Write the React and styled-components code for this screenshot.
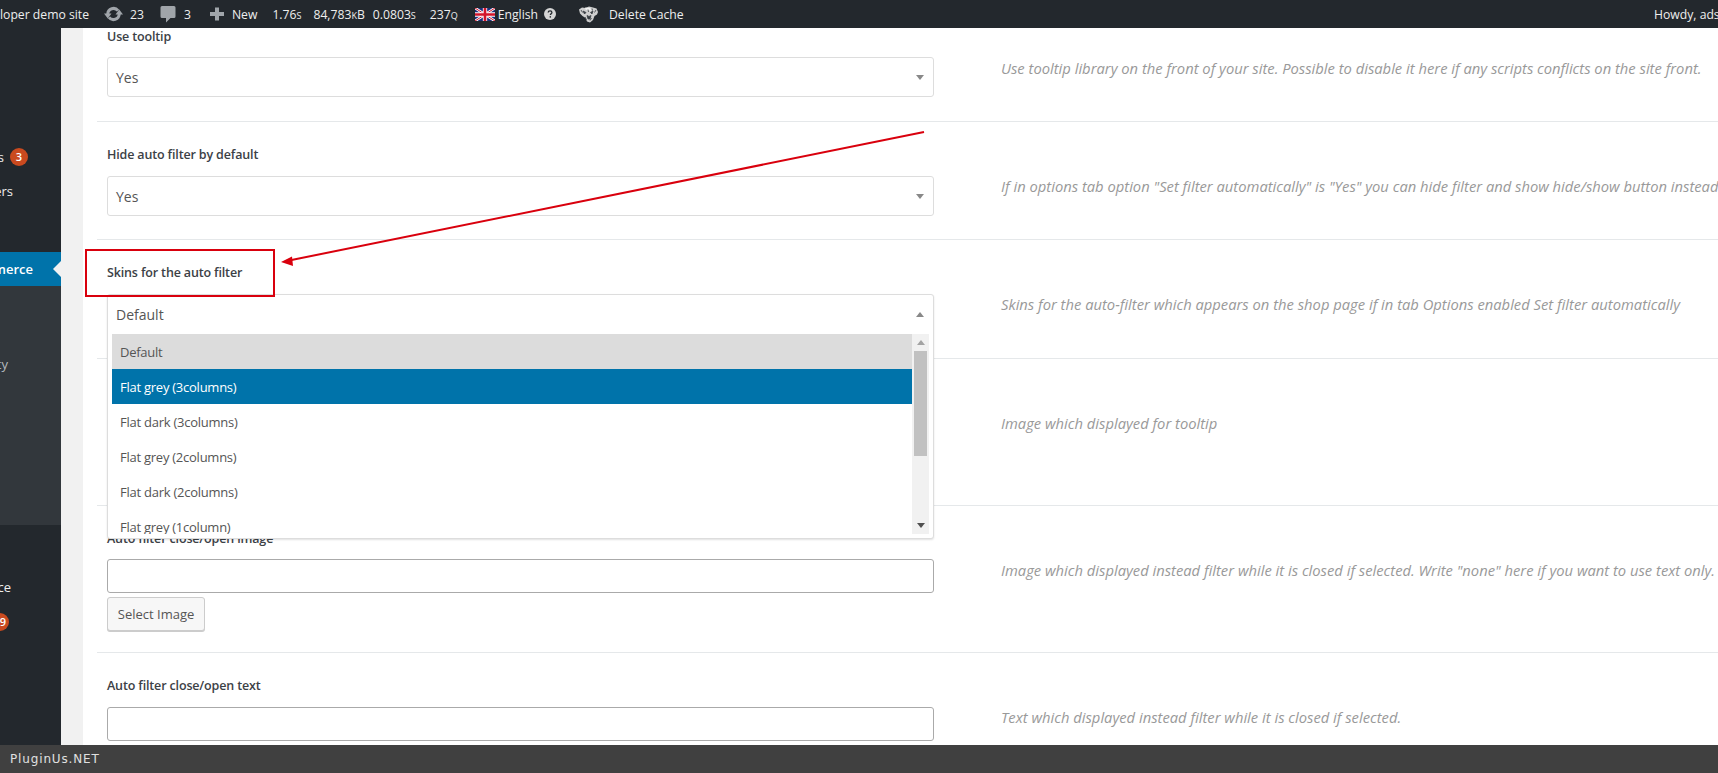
import React from "react";
import styled, { createGlobalStyle } from "styled-components";

const Global = createGlobalStyle`
  html, body { margin: 0; padding: 0; height: 100%; overflow: hidden; background: #fff; }
  body { font-family: "Open Sans", "Liberation Sans", sans-serif; }
  * { box-sizing: border-box; }
`;

const Page = styled.div`
  position: relative;
  width: 100%;
  height: 100vh;
  display: flex;
  flex-direction: column;
  overflow: hidden;
`;

/* admin bar */
const AdminBar = styled.header`
  flex: 0 0 28px;
  z-index: 4;
  display: flex;
  align-items: center;
  justify-content: space-between;
  background: #23282d;
  color: #eee;
  font-size: 12.2px;
  white-space: nowrap;
  overflow: hidden;
`;
const BarLeft = styled.div`
  display: flex;
  align-items: center;
`;
const BarItem = styled.span`
  display: inline-flex;
  align-items: center;
  margin-left: ${(p) => p.$ml || 0}px;
  gap: ${(p) => p.$gap || 0}px;
  font-variant: ${(p) => (p.$small ? "small-caps" : "normal")};
`;
const Howdy = styled.span`
  width: 64px;
  overflow: hidden;
`;

/* wp menu */
const Body = styled.div`
  flex: 1;
  min-height: 0;
  display: flex;
`;
const Sidebar = styled.nav`
  flex: 0 0 61px;
  background: #23282d;
  padding-top: 112px;
  color: #eee;
  font-size: 13px;
  overflow: hidden;
`;
const MenuItem = styled.div`
  position: relative;
  height: 34px;
  margin-top: ${(p) => p.$mt || 0}px;
  padding-right: ${(p) => p.$pr}px;
  display: flex;
  align-items: center;
  justify-content: flex-end;
  gap: 6px;
  white-space: nowrap;
`;
const ActiveItem = styled(MenuItem)`
  background: #0073aa;
  color: #fff;
  font-weight: 600;
  &::after {
    content: "";
    position: absolute;
    right: 0;
    top: 9px;
    border: 8px solid transparent;
    border-left-width: 0;
    border-right-color: #f1f1f1;
  }
`;
const Submenu = styled.div`
  height: 239px;
  padding-top: 61px;
  background: #32373c;
  color: #b4b9be;
  font-size: 13px;
`;
const Badge = styled.span`
  flex: none;
  width: 18px;
  height: 18px;
  border-radius: 50%;
  background: #ca4a1f;
  color: #fff;
  font-size: 11px;
  font-weight: 600;
  line-height: 18px;
  text-align: ${(p) => (p.$clip ? "right" : "center")};
  padding-right: ${(p) => (p.$clip ? 3 : 0)}px;
`;

/* settings */
const Gutter = styled.div`
  flex: 0 0 22px;
  background: #f1f1f1;
`;
const Content = styled.main`
  position: relative;
  flex: 1;
  min-width: 0;
  overflow: hidden;
  background: #fff;
  padding-left: 14px;
`;
const Rows = styled.div`
  margin-top: -24px;
`;
const Row = styled.section`
  display: grid;
  grid-template-columns: 827px 1fr;
  column-gap: 67px;
  padding-left: 10px;
  height: ${(p) => p.$h}px;
  border-bottom: 1px solid #e5e8ea;
`;
const Field = styled.div`
  position: relative;
  padding-top: 23px;
`;
const Label = styled.div`
  height: 20px;
  line-height: 20px;
  font-size: 12.5px;
  font-weight: 600;
  letter-spacing: -0.15px;
  color: #3c4146;
`;
const SelectBox = styled.div`
  position: relative;
  height: 40px;
  margin-top: ${(p) => p.$mt ?? 11}px;
  padding: 0 8px;
  display: flex;
  align-items: center;
  justify-content: space-between;
  border: 1px solid #ddd;
  border-radius: 3px;
  font-size: 14px;
  color: #555;
  background: #fff;
`;
const Caret = styled.i`
  display: block;
  width: 0;
  height: 0;
  margin-right: ${(p) => p.$mr ?? 0}px;
  border-left: 4px solid transparent;
  border-right: 4px solid transparent;
  border-${(p) => (p.$up ? "bottom" : "top")}: 5px solid ${(p) => p.$color || "#888"};
`;
const TextInput = styled.div`
  height: 34px;
  margin-top: ${(p) => p.$mt ?? 10}px;
  border: 1px solid #aaa;
  border-radius: 3px;
  background: #fff;
`;
const PickButton = styled.button`
  display: block;
  width: 98px;
  height: 34px;
  margin-top: 4px;
  padding: 0;
  border: 1px solid #ccc;
  border-radius: 3px;
  background: #f7f7f7;
  box-shadow: 0 1px 0 #ccc;
  color: #555;
  font: 13px "Open Sans", sans-serif;
`;
const Hint = styled.p`
  margin: 0;
  padding-top: 54px;
  line-height: 20px;
  font-size: 14.75px;
  font-style: italic;
  color: #999;
  white-space: nowrap;
`;

/* open dropdown */
const OpenSelect = styled.div`
  position: absolute;
  z-index: 2;
  top: 54px;
  left: 0;
  right: 0;
  height: 245px;
  border: 1px solid #ddd;
  border-radius: 3px;
  background: #fff;
  box-shadow: 0 1px 2px rgba(0, 0, 0, 0.12);
  color: #555;
`;
const OpenHead = styled.div`
  height: 39px;
  padding: 0 8px;
  display: flex;
  align-items: center;
  justify-content: space-between;
  font-size: 14px;
`;
const ListWrap = styled.div`
  height: 200px;
  margin: 0 4px;
  display: flex;
`;
const Options = styled.ul`
  flex: 1;
  margin: 0;
  padding: 0;
  list-style: none;
  overflow: hidden;
`;
const Option = styled.li`
  height: 35px;
  line-height: 35px;
  padding: 1px 0 0 8px;
  font-size: 13px;
  letter-spacing: -0.25px;
  background: ${(p) => (p.$hot ? "#0073aa" : p.$sel ? "#dcdcdc" : "#fff")};
  color: ${(p) => (p.$hot ? "#fff" : "#555")};
`;
const Scrollbar = styled.div`
  flex: 0 0 17px;
  padding: 0 2px;
  display: flex;
  flex-direction: column;
  background: #f1f1f1;
`;
const ScrollBtn = styled.div`
  flex: 0 0 17px;
  margin-top: ${(p) => (p.$end ? "auto" : 0)};
  display: flex;
  align-items: center;
  justify-content: center;
`;
const Thumb = styled.div`
  height: 105px;
  background: #c1c1c1;
`;

/* annotation */
const RedBox = styled.div`
  position: absolute;
  z-index: 3;
  left: 2px;
  top: 221px;
  width: 190px;
  height: 48px;
  border: 2px solid #d9000d;
  pointer-events: none;
`;
const ArrowLayer = styled.svg`
  position: absolute;
  z-index: 3;
  left: 0;
  top: 0;
  width: 100%;
  height: 100%;
  pointer-events: none;
`;

const Footer = styled.footer`
  flex: 0 0 28px;
  z-index: 4;
  padding-left: 10px;
  display: flex;
  align-items: center;
  background: #404040;
  color: #e0e0e0;
  font-family: "DejaVu Sans", sans-serif;
  font-size: 12px;
  letter-spacing: 0.85px;
`;

const RefreshIcon = () => (
  <svg width="19" height="16" viewBox="0 0 19 16" fill="#a0a5aa">
    <path d="M3.750 8a5.750 5.750 0 0 1 10.300-3.300" fill="none" stroke="#a0a5aa" strokeWidth="3" />
    <path d="M15.250 8a5.750 5.750 0 0 1-10.300 3.300" fill="none" stroke="#a0a5aa" strokeWidth="3" />
    <path d="M0 7.500h7.500L3.750 12.500z" />
    <path d="M11.500 8.500H19L15.250 3.500z" />
  </svg>
);
const CommentIcon = () => (
  <svg width="16" height="18" viewBox="0 0 16 18" fill="#a0a5aa">
    <path d="M2 1h12a1.500 1.500 0 0 1 1.500 1.500v9A1.500 1.500 0 0 1 14 13h-3.500L6 17.500V13H2a1.500 1.500 0 0 1-1.500-1.500v-9A1.500 1.500 0 0 1 2 1z" />
  </svg>
);
const PlusIcon = () => (
  <svg width="16" height="16" viewBox="0 0 16 16" fill="#a0a5aa">
    <path d="M6 1.500h4V6h5v4h-5v4.500H6V10H1V6h5z" />
  </svg>
);
const FlagIcon = () => (
  <svg width="20" height="13" viewBox="0 0 60 39">
    <rect width="60" height="39" fill="#1c2f7c" />
    <path d="M0 0l60 39M60 0L0 39" stroke="#fff" strokeWidth="8" />
    <path d="M0 0l60 39M60 0L0 39" stroke="#d3142b" strokeWidth="3" />
    <path d="M30 0v39M0 19.500h60" stroke="#fff" strokeWidth="13" />
    <path d="M30 0v39M0 19.500h60" stroke="#d3142b" strokeWidth="8" />
  </svg>
);
const HelpIcon = () => (
  <svg width="12" height="12" viewBox="0 0 12 12">
    <circle cx="6" cy="6" r="6" fill="#d5d5d5" />
    <path d="M4.200 4.600c0-1.100.8-1.700 1.900-1.700s1.800.6 1.800 1.500c0 1.300-1.500 1.300-1.500 2.500" fill="none" stroke="#23282d" strokeWidth="1.300" />
    <circle cx="6.300" cy="8.900" r=".8" fill="#23282d" />
  </svg>
);
const TigerIcon = () => (
  <svg width="21" height="17" viewBox="0 0 21 17">
    <path d="M1 3.500l3-2 3.500.5L11 .5l4 1 3.500 1L20 6l-1 2.500-2.500 1.500-1.500 4-3 2.500-3-1-1.500-3.500L4.500 10 2 7.500z" fill="#cfcfcf" />
    <path d="M7 1.500l5 .5 1.500 2.500-3.500 0-2.500-1z" fill="#f2f2f2" />
    <path d="M5 5l3 1.500-1.500 1.500zM15 5l-2.500 1.500 1.500 1.500zM9 9.500l2 1 2-1-1 3.500h-2zM3 4l1.500 2.500M18 4l-1.500 2.500M7 11l1.500 3M13.500 12l-1.500 2.500M10 3.500l.5 2.500M14 2.500l.5 2" fill="#3a3f44" stroke="#3a3f44" strokeWidth=".8" />
  </svg>
);

const skins = [
  "Default",
  "Flat grey (3columns)",
  "Flat dark (3columns)",
  "Flat grey (2columns)",
  "Flat dark (2columns)",
  "Flat grey (1column)",
];

const YesSelect = ({ mt }) => (
  <SelectBox $mt={mt}>
    Yes
    <Caret $mr={1} />
  </SelectBox>
);

export default function App() {
  return (
    <Page>
      <Global />
      <AdminBar>
        <BarLeft>
          <BarItem>loper demo site</BarItem>
          <BarItem $ml={15} $gap={7}>
            <RefreshIcon />
            23
          </BarItem>
          <BarItem $ml={16} $gap={8}>
            <CommentIcon />3
          </BarItem>
          <BarItem $ml={18} $gap={7}>
            <PlusIcon />
            New
          </BarItem>
          <BarItem $ml={15} $small>1.76s</BarItem>
          <BarItem $ml={12} $small>84,783kB</BarItem>
          <BarItem $ml={8} $small>0.0803s</BarItem>
          <BarItem $ml={14} $small>237q</BarItem>
          <BarItem $ml={17} $gap={3}>
            <FlagIcon />
            English
          </BarItem>
          <BarItem $ml={6}>
            <HelpIcon />
          </BarItem>
          <BarItem $ml={22} $gap={10}>
            <TigerIcon />
            Delete Cache
          </BarItem>
        </BarLeft>
        <Howdy>Howdy, ads</Howdy>
      </AdminBar>

      <Body>
        <Sidebar>
          <MenuItem $pr={33}>
            s<Badge>3</Badge>
          </MenuItem>
          <MenuItem $pr={48}>ers</MenuItem>
          <ActiveItem $mt={44} $pr={28}>merce</ActiveItem>
          <Submenu>
            <MenuItem $pr={53}>ty</MenuItem>
          </Submenu>
          <MenuItem $mt={45} $pr={50}>ce</MenuItem>
          <MenuItem $mt={1} $pr={52}>
            <Badge $clip>9</Badge>
          </MenuItem>
        </Sidebar>
        <Gutter />
        <Content>
          <Rows>
            <Row $h={118}>
              <Field>
                <Label>Use tooltip</Label>
                <YesSelect mt={10} />
              </Field>
              <Hint>Use tooltip library on the front of your site. Possible to disable it here if any scripts conflicts on the site front.</Hint>
            </Row>
            <Row $h={118}>
              <Field>
                <Label>Hide auto filter by default</Label>
                <YesSelect />
              </Field>
              <Hint>If in options tab option "Set filter automatically" is "Yes" you can hide filter and show hide/show button instead</Hint>
            </Row>
            <Row $h={119}>
              <Field>
                <Label>Skins for the auto filter</Label>
                <OpenSelect>
                  <OpenHead>
                    Default
                    <Caret $up $mr={1} />
                  </OpenHead>
                  <ListWrap>
                    <Options>
                      {skins.map((s, i) => (
                        <Option key={s} $sel={i === 0} $hot={i === 1}>
                          {s}
                        </Option>
                      ))}
                    </Options>
                    <Scrollbar>
                      <ScrollBtn>
                        <Caret $up $color="#a3a3a3" />
                      </ScrollBtn>
                      <Thumb />
                      <ScrollBtn $end>
                        <Caret $color="#505050" />
                      </ScrollBtn>
                    </Scrollbar>
                  </ListWrap>
                </OpenSelect>
              </Field>
              <Hint>Skins for the auto-filter which appears on the shop page if in tab Options enabled Set filter automatically</Hint>
            </Row>
            <Row $h={147}>
              <Field />
              <Hint>Image which displayed for tooltip</Hint>
            </Row>
            <Row $h={147}>
              <Field>
                <Label>Auto filter close/open image</Label>
                <TextInput />
                <PickButton>Select Image</PickButton>
              </Field>
              <Hint>Image which displayed instead filter while it is closed if selected. Write "none" here if you want to use text only.</Hint>
            </Row>
            <Row $h={147}>
              <Field>
                <Label>Auto filter close/open text</Label>
                <TextInput $mt={11} />
              </Field>
              <Hint>Text which displayed instead filter while it is closed if selected.</Hint>
            </Row>
          </Rows>
          <RedBox />
          <ArrowLayer>
            <line x1="841" y1="104" x2="206" y2="232.500" stroke="#d9000d" strokeWidth="2" />
            <path d="M198 234l11-5.500 1 9.500z" fill="#d9000d" />
          </ArrowLayer>
        </Content>
      </Body>

      <Footer>PluginUs.NET</Footer>
    </Page>
  );
}
